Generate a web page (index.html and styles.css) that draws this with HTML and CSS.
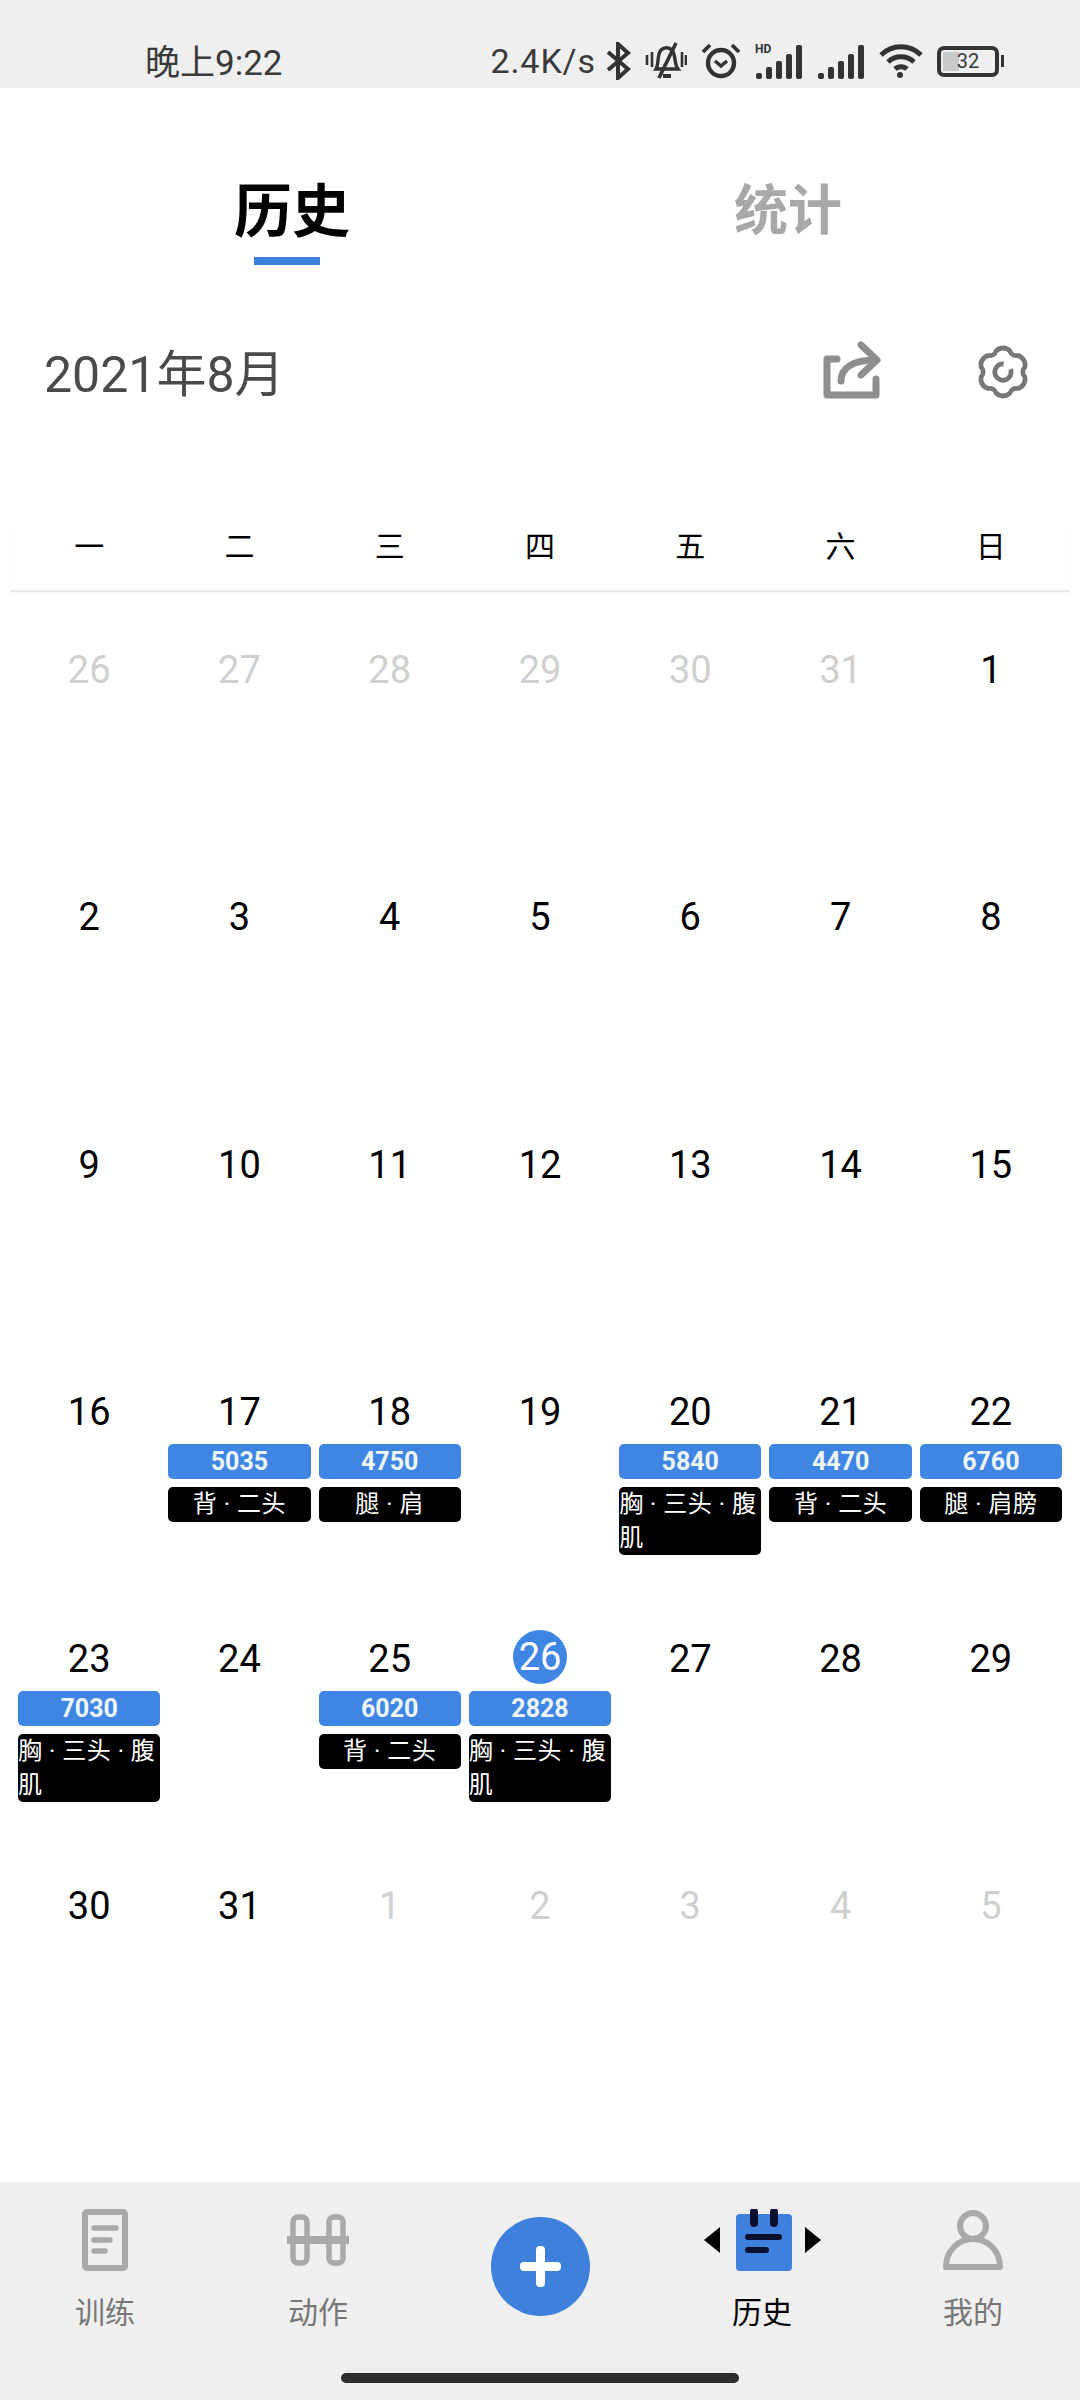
FILE: index.html
```html
<!DOCTYPE html>
<html lang="zh-CN">
<head>
  <meta charset="UTF-8">
  <title>历史</title>
  <link rel="stylesheet" href="styles.css">
</head>

<body>
  <div class="app">
    <!-- STATUS BAR -->
    <div class="status-bar">
      <div class="status-time">晚上9:22</div>
      <div class="status-right">
        <div class="status-speed">2.4K/s</div>
        <svg class="st-bt" viewBox="0 0 25 38"><path d="M2 10 L22 27 L12 36 V2 L22 11 L2 28" fill="none" stroke="#333" stroke-width="4"/></svg>
        <svg class="st-bell" viewBox="0 0 42 38" fill="none" stroke="#333" stroke-width="3.4"><path d="M11 27 C14 22 12 12 16 8 C19 5 24 5 27 8 C31 13 29 22 33 27 Z"/><path d="M31 1 L14 36" stroke-width="3.6"/><path d="M18 34 H26" stroke-width="4"/><path d="M2 13 V23 M7 10 V25 M37 10 V25 M41 13 V23" stroke-width="2.6"/></svg>
        <svg class="st-alarm" viewBox="0 0 40 38" fill="none" stroke="#333"><circle cx="20" cy="21" r="13" stroke-width="4.4"/><path d="M14 19 L20 24 L26 19" stroke-width="3.4"/><path d="M2 10 L9 3 M38 10 L31 3" stroke-width="3.8"/></svg>
        <svg class="st-sig-hd" viewBox="0 0 48 38" fill="#333">
          <text x="0" y="11" class="hd-text">HD</text>
          <rect x="1" y="31" width="6" height="6" rx="2"/><rect x="11" y="25" width="6" height="12" rx="2"/><rect x="21" y="19" width="6" height="18" rx="2"/><rect x="31" y="12" width="6" height="25" rx="2"/><rect x="41" y="3" width="6" height="34" rx="2"/>
        </svg>
        <svg class="st-sig" viewBox="0 0 48 38" fill="#333"><rect x="1" y="31" width="6" height="6" rx="2"/><rect x="11" y="25" width="6" height="12" rx="2"/><rect x="21" y="19" width="6" height="18" rx="2"/><rect x="31" y="12" width="6" height="25" rx="2"/><rect x="41" y="3" width="6" height="34" rx="2"/></svg>
        <svg class="st-wifi" viewBox="0 0 44 38" fill="none" stroke="#333" stroke-width="4.8"><path d="M2 13 C13 2 31 2 42 13"/><path d="M9 20 C16 13 28 13 35 20"/><path d="M16 27 C19 24 25 24 28 27"/><circle cx="21" cy="33" r="3" fill="#333" stroke="none"/></svg>
        <div class="battery">
          <div class="battery-body"><div class="battery-fill"></div><span class="battery-num">32</span></div>
          <div class="battery-tip"></div>
        </div>
      </div>
    </div>

    <!-- TABS -->
    <div class="tabs">
      <div class="tab tab-active">历史<div class="tab-line"></div></div>
      <div class="tab">统计</div>
    </div>

    <!-- MONTH -->
    <div class="month-row">
      <div class="month-title">2021年8月</div>
      <div class="month-actions">
        <svg class="icon-share" viewBox="0 0 66 64" fill="none" stroke="#8e8e8e" stroke-width="7" stroke-linecap="round" stroke-linejoin="round"><path d="M18 19 H8 V55 H57 V39"/><path d="M42 5 L58 20 L42 35"/><path d="M22 41 C22 28 34 20 56 20"/></svg>
        <svg class="icon-gear" viewBox="0 0 56 56" fill="none" stroke="#777" stroke-width="5" stroke-linejoin="round"><path d="M20.9 6.1 A10 10 0 0 1 35.1 6.1 A7 7 0 0 0 43.4 10.9 A10 10 0 0 1 50.5 23.2 A7 7 0 0 0 50.5 32.8 A10 10 0 0 1 43.4 45.1 A7 7 0 0 0 35.1 49.9 A10 10 0 0 1 20.9 49.9 A7 7 0 0 0 12.6 45.1 A10 10 0 0 1 5.5 32.8 A7 7 0 0 0 5.5 23.2 A10 10 0 0 1 12.6 10.9 A7 7 0 0 0 20.9 6.1 Z"/><circle cx="28" cy="28" r="8.5" stroke-dasharray="43.4 10" transform="rotate(-20 28 28)"/></svg>
      </div>
    </div>

    <!-- WEEKDAYS -->
    <div class="weekdays">
      <div>一</div><div>二</div><div>三</div><div>四</div><div>五</div><div>六</div><div>日</div>
    </div>

    <!-- CALENDAR -->
    <div class="calendar">
      <div class="day muted"><div class="num">26</div></div>
      <div class="day muted"><div class="num">27</div></div>
      <div class="day muted"><div class="num">28</div></div>
      <div class="day muted"><div class="num">29</div></div>
      <div class="day muted"><div class="num">30</div></div>
      <div class="day muted"><div class="num">31</div></div>
      <div class="day"><div class="num">1</div></div>

      <div class="day"><div class="num">2</div></div>
      <div class="day"><div class="num">3</div></div>
      <div class="day"><div class="num">4</div></div>
      <div class="day"><div class="num">5</div></div>
      <div class="day"><div class="num">6</div></div>
      <div class="day"><div class="num">7</div></div>
      <div class="day"><div class="num">8</div></div>

      <div class="day"><div class="num">9</div></div>
      <div class="day"><div class="num">10</div></div>
      <div class="day"><div class="num">11</div></div>
      <div class="day"><div class="num">12</div></div>
      <div class="day"><div class="num">13</div></div>
      <div class="day"><div class="num">14</div></div>
      <div class="day"><div class="num">15</div></div>

      <div class="day"><div class="num">16</div></div>
      <div class="day"><div class="num">17</div><div class="volume">5035</div><div class="parts"><span>背 · 二头</span></div></div>
      <div class="day"><div class="num">18</div><div class="volume">4750</div><div class="parts"><span>腿 · 肩</span></div></div>
      <div class="day"><div class="num">19</div></div>
      <div class="day"><div class="num">20</div><div class="volume">5840</div><div class="parts"><span>胸 · 三头 · 腹肌</span></div></div>
      <div class="day"><div class="num">21</div><div class="volume">4470</div><div class="parts"><span>背 · 二头</span></div></div>
      <div class="day"><div class="num">22</div><div class="volume">6760</div><div class="parts"><span>腿 · 肩膀</span></div></div>

      <div class="day"><div class="num">23</div><div class="volume">7030</div><div class="parts"><span>胸 · 三头 · 腹肌</span></div></div>
      <div class="day"><div class="num">24</div></div>
      <div class="day"><div class="num">25</div><div class="volume">6020</div><div class="parts"><span>背 · 二头</span></div></div>
      <div class="day today"><div class="num"><span>26</span></div><div class="volume">2828</div><div class="parts"><span>胸 · 三头 · 腹肌</span></div></div>
      <div class="day"><div class="num">27</div></div>
      <div class="day"><div class="num">28</div></div>
      <div class="day"><div class="num">29</div></div>

      <div class="day"><div class="num">30</div></div>
      <div class="day"><div class="num">31</div></div>
      <div class="day muted"><div class="num">1</div></div>
      <div class="day muted"><div class="num">2</div></div>
      <div class="day muted"><div class="num">3</div></div>
      <div class="day muted"><div class="num">4</div></div>
      <div class="day muted"><div class="num">5</div></div>
    </div>

    <!-- BOTTOM NAV -->
    <div class="bottom-nav">
      <div class="nav-items">
        <div class="nav-item">
          <svg class="nav-icon" viewBox="0 0 64 62" fill="none" stroke="#a9a9a9"><rect x="12" y="3" width="40" height="56" rx="2" stroke-width="6"/><path d="M21 19 H43 M21 31 H37 M21 42 H32" stroke-width="5.5" stroke-linecap="round"/></svg>
          <div class="nav-label">训练</div>
        </div>
        <div class="nav-item">
          <svg class="nav-icon" viewBox="0 0 64 62" fill="none" stroke="#a9a9a9"><rect x="7" y="8" width="14" height="46" rx="5" stroke-width="5.5"/><rect x="43" y="8" width="14" height="46" rx="5" stroke-width="5.5"/><path d="M1 31 H63" stroke-width="8"/></svg>
          <div class="nav-label">动作</div>
        </div>
        <div class="nav-add">
          <div class="add-btn"><div class="add-plus"></div></div>
        </div>
        <div class="nav-item nav-active">
          <div class="nav-current">
            <div class="arrow-left"></div>
            <svg class="nav-icon" viewBox="0 0 64 62"><rect x="4" y="5" width="56" height="57" rx="4" fill="#3f80dc"/><g fill="none" stroke="#0b1030" stroke-linecap="round"><path d="M22 3 V14 M42 3 V14" stroke-width="8"/><path d="M16 28 H47" stroke-width="6"/><path d="M16 41 H34" stroke-width="6"/></g></svg>
            <div class="arrow-right"></div>
          </div>
          <div class="nav-label">历史</div>
        </div>
        <div class="nav-item">
          <svg class="nav-icon" viewBox="0 0 64 62" fill="none" stroke="#a9a9a9" stroke-width="6"><circle cx="32" cy="17" r="13"/><path d="M5 58 C5 42 17 30 32 30 C47 30 59 42 59 58 Z" stroke-linejoin="round"/></svg>
          <div class="nav-label">我的</div>
        </div>
      </div>
      <div class="home-bar"></div>
    </div>
  </div>
</body>
</html>
```

FILE: styles.css
```css
/* ===============================
   BASE
=============================== */
html, body {
  margin: 0;
  padding: 0;
  background: #fff;
}
body {
  font-family: Roboto, "Noto Sans CJK SC", sans-serif;
  color: #000;
}
.app {
  display: flex;
  flex-direction: column;
  width: 1080px;
  height: 2400px;
  overflow: hidden;
}

/* ===============================
   STATUS BAR
=============================== */
.status-bar {
  display: flex;
  align-items: center;
  justify-content: space-between;
  height: 88px;
  padding: 34px 76px 0 145px;
  box-sizing: border-box;
  background: #efefef;
  color: #3a3a3a;
  font-size: 34px;
}
.status-time {
  margin-bottom: 3px;
  font-size: 35px;
}
.status-right {
  display: flex;
  align-items: center;
  gap: 14px;
}
.status-speed {
  margin-right: -4px;
  letter-spacing: 0.9px;
}
.status-right svg {
  height: 38px;
  flex: none;
}
.st-bt { width: 25px; }
.st-bell { width: 42px; }
.st-alarm { width: 40px; }
.st-sig-hd, .st-sig { width: 48px; }
.st-wifi { width: 44px; }
.hd-text {
  font-size: 12px;
  font-weight: 700;
}
.battery {
  display: flex;
  align-items: center;
  gap: 2px;
}
.battery-body {
  position: relative;
  display: flex;
  align-items: center;
  justify-content: center;
  width: 62px;
  height: 31px;
  border: 4px solid #333;
  border-radius: 7px;
  box-sizing: border-box;
}
.battery-fill {
  position: absolute;
  left: 2px;
  top: 2px;
  bottom: 2px;
  width: 16px;
  background: #c9c9c9;
}
.battery-num {
  position: relative;
  font-size: 20px;
}
.battery-tip {
  width: 3px;
  height: 12px;
  background: #333;
}

/* ===============================
   TABS
=============================== */
.tabs {
  display: flex;
  padding: 89px 0 0 192px;
  height: 88px;
}
.tab {
  flex: none;
  width: 200px;
  text-align: center;
  font-size: 54px;
  line-height: 70px;
  font-weight: 700;
  color: #a8a8a8;
}
.tab-active {
  margin-right: 296px;
  font-size: 58px;
  color: #000;
}
.tab-line {
  width: 66px;
  height: 8px;
  margin: 10px 0 0 62px;
  background: #3f7fdc;
}

/* ===============================
   MONTH
=============================== */
.month-row {
  display: flex;
  align-items: center;
  justify-content: space-between;
  height: 60px;
  margin-top: 77px;
  padding: 0 50px 0 44px;
}
.month-title {
  padding-bottom: 5px;
  font-size: 50px;
  color: #4a4a4a;
}
.month-actions {
  display: flex;
  align-items: center;
  gap: 91px;
}
.icon-share {
  width: 66px;
  height: 64px;
}
.icon-gear {
  width: 54px;
  height: 54px;
}

/* ===============================
   CALENDAR
=============================== */
.weekdays {
  display: grid;
  grid-template-columns: repeat(7, 1fr);
  margin: 125px 10px 0;
  padding: 0 4px 23px;
  border-bottom: 2px solid #e9e9e9;
  box-shadow: 0 2px 3px rgba(0, 0, 0, 0.04);
  text-align: center;
  font-size: 30px;
  line-height: 40px;
}
.calendar {
  flex: 1;
  display: grid;
  grid-template-columns: repeat(7, 1fr);
  grid-auto-rows: 247.3px;
  padding: 51px 14px 0;
  min-height: 0;
  overflow: hidden;
}
.day {
  display: flex;
  flex-direction: column;
  align-items: center;
  padding: 0 4px;
  min-width: 0;
}
.num {
  height: 54px;
  line-height: 54px;
  margin-bottom: 5px;
  font-size: 38px;
  text-align: center;
}
.muted .num {
  color: #cfcfcf;
}
.today .num span {
  display: block;
  width: 54px;
  height: 54px;
  border-radius: 50%;
  background: #3f86e4;
  color: #fff;
}
.today .num {
  margin-top: -2px;
  margin-bottom: 7px;
}
.volume {
  width: 100%;
  height: 35px;
  line-height: 35px;
  border-radius: 5px;
  background: #3f86e4;
  color: #eef6f4;
  text-align: center;
  font-size: 25px;
  font-weight: 700;
}
.parts {
  display: flex;
  justify-content: center;
  width: 100%;
  min-height: 35px;
  margin-top: 8px;
  border-radius: 5px;
  background: #000;
  color: #fff;
  font-size: 24px;
  line-height: 34px;
  letter-spacing: 0.5px;
}

/* ===============================
   BOTTOM NAV
=============================== */
.bottom-nav {
  height: 218px;
  padding-top: 27px;
  box-sizing: border-box;
  background: #efefef;
}
.nav-items {
  display: grid;
  grid-template-columns: 210px 216px 228px 216px 206px;
  height: 130px;
}
.nav-item {
  display: flex;
  flex-direction: column;
  align-items: center;
}
.nav-icon {
  display: block;
  width: 64px;
  height: 62px;
}
.nav-label {
  margin-top: 22px;
  font-size: 30px;
  line-height: 40px;
  color: #777;
}
.nav-active .nav-label {
  color: #000;
}
.nav-current {
  display: flex;
  align-items: center;
  gap: 12px;
}
.arrow-left, .arrow-right {
  width: 0;
  height: 0;
  border-top: 13px solid transparent;
  border-bottom: 13px solid transparent;
}
.arrow-left { border-right: 16px solid #000; }
.arrow-right {
  margin-left: -3px;
  border-left: 16px solid #000;
}
.nav-add {
  display: flex;
  justify-content: center;
}
.add-btn {
  position: relative;
  width: 99px;
  height: 99px;
  margin-top: 8px;
  border-radius: 50%;
  background: #3f80dc;
}
.add-plus, .add-plus::after {
  position: absolute;
  background: #fff;
  border-radius: 4px;
}
.add-plus {
  left: 29px;
  top: 45px;
  width: 41px;
  height: 9px;
}
.add-plus::after {
  content: '';
  left: 16px;
  top: -16px;
  width: 9px;
  height: 41px;
}
.home-bar {
  width: 398px;
  height: 10px;
  margin: 34px auto 0;
  border-radius: 5px;
  background: #2d2d2d;
}
```
